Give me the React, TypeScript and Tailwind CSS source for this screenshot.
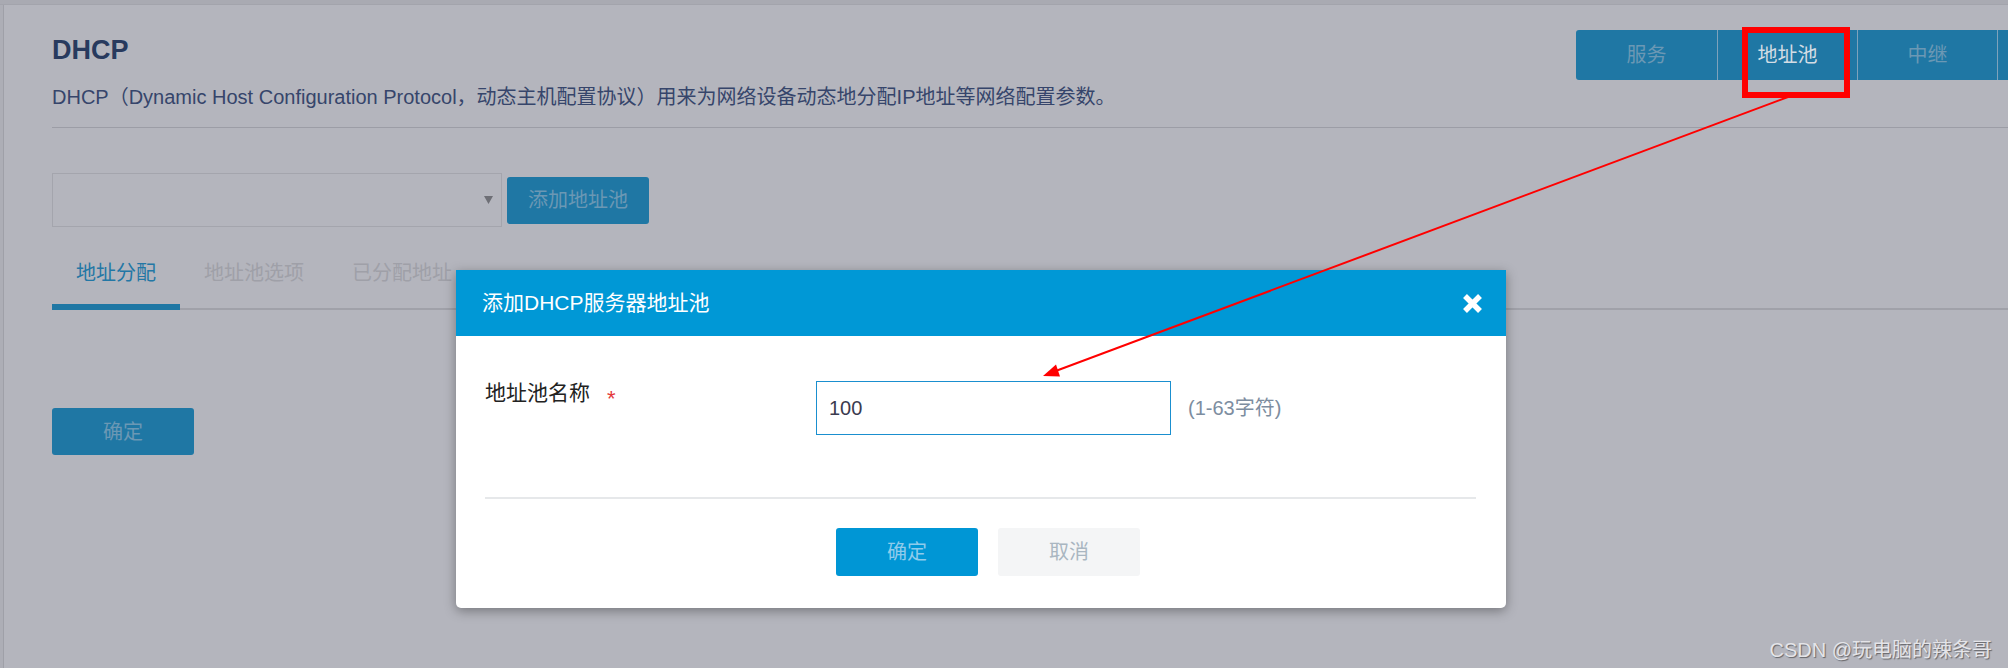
const font = "font-['Liberation_Sans','Noto_Sans_CJK_SC',sans-serif]";

const tabs = ["地址分配", "地址池选项", "已分配地址"];

function CloseIcon() {
  return (
    <svg width="21" height="21" viewBox="0 0 21 21">
      <path d="M3 3 L18 18 M18 3 L3 18" stroke="#fff" strokeWidth="5.5" strokeLinecap="butt" />
    </svg>
  );
}

function AddPoolDialog() {
  return (
    <div className="absolute left-[456px] top-[270px] w-[1050px] rounded-b-[5px] bg-white shadow-[0_3px_12px_rgba(0,0,0,0.35)]">
      <div className="flex h-[66px] items-center justify-between bg-[#0098d6] pl-[26px] pr-[23px]">
        <h2 className="text-[21px] leading-[30px] text-white">添加DHCP服务器地址池</h2>
        <CloseIcon />
      </div>
      <div className="pt-[42px] pb-[32px]">
        <div className="flex items-start pl-[29px]">
          <div className="flex w-[331px] shrink-0 items-start">
            <span className="text-[21px] leading-[30px] text-[#222]">地址池名称</span>
            <span className="ml-[17px] mt-[6px] text-[22px] leading-[30px] text-[#e4393c]">*</span>
          </div>
          <div className="mt-[3px] flex items-center">
            <input
              value="100"
              readOnly
              className="h-[54px] w-[355px] border border-[#1a8fcf] px-[12px] text-[20px] text-[#3b3b4f] outline-none"
            />
            <span className="ml-[17px] text-[20px] text-[#7d8da0]">(1-63字符)</span>
          </div>
        </div>
        <div className="mt-[62px] ml-[29px] mr-[30px] h-[2px] bg-[#e6e8ea]" />
        <div className="mt-[29px] flex justify-center gap-[20px] pl-[14px]">
          <button className="h-[48px] w-[142px] rounded-[3px] bg-[#0096d5] text-[20px] text-[#8fcbeb]">确定</button>
          <button className="h-[48px] w-[142px] rounded-[3px] bg-[#f4f5f6] text-[20px] text-[#a9b6c1]">取消</button>
        </div>
      </div>
    </div>
  );
}

export default function App() {
  return (
    <div className={`relative h-[668px] w-[2008px] overflow-hidden bg-[#b4b5bd] ${font}`}>
      <div className="h-[5px] border-b border-[#a3a4ac] bg-[#a9aab2]" />
      <div className="flex h-[663px]">
        <div className="w-[4px] shrink-0 border-r border-[#9fa0a8] bg-[#adaeb6]" />
        <main className="flex-1 pl-[48px]">
          <header className="flex border-b border-[#9c9da6] pb-[16px]">
            <div className="w-[1524px] shrink-0 pt-[30px]">
              <h1 className="text-[27px] leading-[31px] font-bold text-[#283a5e]">DHCP</h1>
              <p className="mt-[17px] text-[20px] leading-[28px] text-[#36456b]">
                DHCP（Dynamic Host Configuration Protocol，动态主机配置协议）用来为网络设备动态地分配IP地址等网络配置参数。
              </p>
            </div>
            <nav className="mt-[25px] flex h-[50px] shrink-0">
              <button className="h-[50px] w-[141px] rounded-l-[3px] bg-[#1f77a4] text-[20px] text-[#6b98b4]">服务</button>
              <button className="h-[50px] w-[140px] border-l border-[#7ea2bb] bg-[#1f77a4] text-[20px] text-[#d3dde5]">地址池</button>
              <button className="h-[50px] w-[140px] border-l border-[#7ea2bb] bg-[#1f77a4] text-[20px] text-[#6b98b4]">中继</button>
              <div className="h-[50px] w-[140px] border-l border-[#7ea2bb] bg-[#1f77a4]" />
            </nav>
          </header>

          <div className="mt-[45px] flex items-center gap-[5px]">
            <div className="flex h-[54px] w-[450px] items-center justify-end border border-[#a4a5ad] pr-[8px]">
              <svg width="9" height="8" viewBox="0 0 9 8">
                <polygon points="0,0 9,0 4.5,8" fill="#6e6f76" />
              </svg>
            </div>
            <button className="h-[47px] w-[142px] rounded-[3px] bg-[#1f77a4] text-[20px] text-[#6b98b4]">添加地址池</button>
          </div>

          <div className="mt-[32px] flex border-b-2 border-[#a0a1a9]">
            {tabs.map((t, i) => (
              <div
                key={t}
                className={
                  i === 0
                    ? "-mb-[2px] border-b-[6px] border-[#1f77a4] px-6 pb-[17px] text-[20px] leading-[28px] text-[#2377a5]"
                    : "-mb-[2px] border-b-[6px] border-transparent px-6 pb-[17px] text-[20px] leading-[28px] text-[#9fa0a8]"
                }
              >
                {t}
              </div>
            ))}
          </div>

          <button className="mt-[98px] h-[47px] w-[142px] rounded-[3px] bg-[#1f77a4] text-[20px] text-[#6b98b4]">确定</button>
        </main>
      </div>

      <AddPoolDialog />

      <div className="absolute left-[1742px] top-[27px] h-[71px] w-[108px] border-[6px] border-[#ff0000]" />
      <svg className="pointer-events-none absolute inset-0" width="2008" height="668" viewBox="0 0 2008 668">
        <line x1="1788" y1="97" x2="1057" y2="370.5" stroke="#ff0000" strokeWidth="2" />
        <polygon points="1043,376 1056,364.5 1060,376.5" fill="#ff0000" />
      </svg>

      <div className="absolute right-[16px] bottom-[4px] text-[20px] leading-[28px] text-[#e4e4e8] [text-shadow:1px_1px_1px_rgba(0,0,0,0.45)]">
        CSDN @玩电脑的辣条哥
      </div>
    </div>
  );
}
